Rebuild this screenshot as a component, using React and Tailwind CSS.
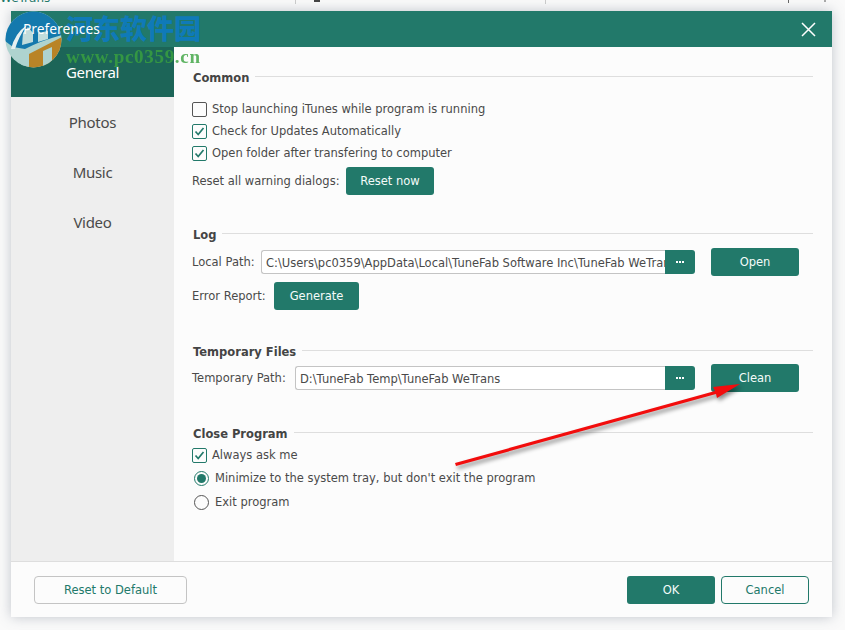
import React from 'react'

const Check = ({ checked }) => (
  <span className={`flex h-[15px] w-[15px] shrink-0 items-center justify-center rounded-[2px] border ${checked ? 'border-[#22796a]' : 'border-[#555]'}`}>
    {checked && (
      <svg width="11" height="11" viewBox="0 0 11 11" fill="none">
        <path d="M1.5 5.5 L4.2 8.5 L9.5 2" stroke="#22796a" strokeWidth="1.7" />
      </svg>
    )}
  </span>
)

const CheckRow = ({ checked, label, className }) => (
  <div className={`-ml-[1px] flex h-[22px] items-center gap-[5px] ${className || ''}`}>
    <Check checked={checked} />
    <span className="pt-[2px]">{label}</span>
  </div>
)

const Radio = ({ checked, label, className }) => (
  <div className={`flex items-center gap-[6px] pl-[1px] ${className || ''}`}>
    <span className={`flex h-[15px] w-[15px] shrink-0 items-center justify-center rounded-full border ${checked ? 'border-[#22796a]' : 'border-[#555]'}`}>
      {checked && <span className="h-[9px] w-[9px] rounded-full bg-[#22796a]" />}
    </span>
    <span className="pt-[2px]">{label}</span>
  </div>
)

const Heading = ({ title, className }) => (
  <div className={`flex h-[16px] items-center gap-[6px] ${className || ''}`}>
    <span className="pt-[2px] font-bold text-[#444]">{title}</span>
    <span className="mb-[4px] h-px flex-1 bg-[#dedede]" />
  </div>
)

const GreenButton = ({ label, className }) => (
  <button className={`h-[28px] rounded-[3px] bg-[#22796a] pt-[2px] text-[#f4fbf9] ${className || ''}`}>{label}</button>
)

const PathField = ({ value, className }) => (
  <div className={`flex h-[24px] ${className || ''}`}>
    <div className="flex-1 overflow-hidden whitespace-nowrap rounded-l-[3px] border border-r-0 border-[#c4c4c4] bg-white pl-[4px] leading-[24px]">{value}</div>
    <div className="flex w-[30px] items-center justify-center gap-[1px] rounded-r-[3px] bg-[#22796a]">
      <span className="h-[2px] w-[2px] bg-white" />
      <span className="h-[2px] w-[2px] bg-white" />
      <span className="h-[2px] w-[2px] bg-white" />
    </div>
  </div>
)

const menu = ['General', 'Photos', 'Music', 'Video']

const App = () => {
  return (
    <div className="relative h-[630px] w-[845px] overflow-hidden bg-[#fafafa] pl-[11px] pt-[11px] font-['DejaVu_Sans',sans-serif] text-[11.5px] text-[#4a4a4a]">
      {/* window behind the dialog */}
      <div className="absolute left-0 top-[-11px] text-[12px] text-[#22796a]">WeTrans</div>
      <div className="absolute left-[295px] top-0 h-[4px] w-px bg-[#ccc]" />
      <div className="absolute left-[545px] top-0 h-[4px] w-px bg-[#ccc]" />
      <div className="absolute left-[314px] top-0 h-[2px] w-[6px] bg-[#444]" />
      <div className="absolute left-[788px] top-0 h-[3px] w-px bg-[#666]" />
      <div className="absolute left-[824px] top-0 h-[2px] w-[2px] bg-[#aaa]" />

      <div className="relative flex h-[606px] w-[821px] flex-col bg-[#fcfcfc] shadow-[0_0_12px_rgba(90,100,120,0.35)]">
        <div className="flex h-[36px] items-center justify-between bg-[#22796a] pl-[12px] pr-[16px] font-['Noto_Sans',sans-serif] text-[13.8px] text-white">
          <span className="relative z-10">Preferences</span>
          <svg width="15" height="15" viewBox="0 0 15 15" fill="none">
            <path d="M1 1 L14 14 M14 1 L1 14" stroke="white" strokeWidth="1.5" />
          </svg>
        </div>

        <div className="flex flex-1">
          <div className="w-[163px] bg-[#eeeeee] text-center font-['Noto_Sans',sans-serif] text-[15px] tracking-[-0.3px]">
            {menu.map((item, i) => (
              <div
                key={item}
                className={`flex h-[50px] items-center justify-center ${i === 0 ? 'bg-[#1c6558] text-white' : 'text-[#4a4a4a]'}`}
              >
                {item}
              </div>
            ))}
          </div>

          <div className="flex-1 pl-[19px] pr-[19px] pt-[23px]">
            <Heading title="Common" />
            <CheckRow className="mt-[12px]" label="Stop launching iTunes while program is running" />
            <CheckRow checked label="Check for Updates Automatically" />
            <CheckRow checked label="Open folder after transfering to computer" />
            <div className="-ml-[1px] mt-[3px] flex items-center">
              <span className="w-[154px] pt-[2px]">Reset all warning dialogs:</span>
              <GreenButton label="Reset now" className="w-[88px]" />
            </div>

            <Heading title="Log" className="mt-[32px]" />
            <div className="-ml-[1px] mt-[5px] flex items-center">
              <span className="w-[69px] pt-[2px]">Local Path:</span>
              <PathField className="w-[434px]" value="C:\Users\pc0359\AppData\Local\TuneFab Software Inc\TuneFab WeTrans" />
              <GreenButton label="Open" className="ml-[16px] w-[88px]" />
            </div>
            <div className="-ml-[1px] mt-[6px] flex items-center">
              <span className="w-[82px] pt-[2px]">Error Report:</span>
              <GreenButton label="Generate" className="w-[85px]" />
            </div>

            <Heading title="Temporary Files" className="mt-[34px]" />
            <div className="-ml-[1px] mt-[4px] flex items-center">
              <span className="w-[103px] pt-[2px]">Temporary Path:</span>
              <PathField className="w-[400px]" value="D:\TuneFab Temp\TuneFab WeTrans" />
              <GreenButton label="Clean" className="ml-[16px] w-[88px]" />
            </div>

            <Heading title="Close Program" className="mt-[34px]" />
            <CheckRow checked label="Always ask me" className="mt-[2px]" />
            <Radio checked label="Minimize to the system tray, but don't exit the program" className="mt-[2px] h-[20px]" />
            <Radio label="Exit program" className="mt-[4px] h-[20px]" />
          </div>
        </div>

        <div className="flex h-[56px] items-center border-t border-[#dedede] pl-[23px] pr-[23px]">
          <button className="h-[28px] w-[153px] rounded-[4px] border border-[#c4c4c4] pt-[2px] text-[#22796a]">Reset to Default</button>
          <GreenButton label="OK" className="ml-auto w-[88px]" />
          <button className="ml-[6px] h-[28px] w-[88px] rounded-[4px] border border-[#22796a] pt-[2px] text-[#22796a]">Cancel</button>
        </div>
      </div>

      {/* site watermark over the title bar */}
      <svg className="absolute left-[5px] top-[11px]" width="57" height="57" viewBox="0 0 57 57">
        <clipPath id="logo">
          <circle cx="28.5" cy="28.5" r="28" />
        </clipPath>
        <g clipPath="url(#logo)">
          <rect width="57" height="57" fill="#aed3cf" />
          <path d="M0 0 H57 V24 Q35 30 20 38 L8 36 L0 30 Z" fill="#1479ad" />
          <path d="M22 44 L57 26 V57 H22 Z" fill="#b98427" />
          <path d="M38 40 L47 36 V50 L38 57 Z" fill="#aed3cf" />
          <path d="M16 42 L24 42 V57 L16 57 Z" fill="#aed3cf" />
          <path d="M17 34 L18 22 L23 16 L28 22 V31 Z" fill="#c0dcdc" />
          <path d="M33 31 V22 L43 20 V28 Z" fill="#c0dcdc" />
          <path d="M6 38 Q10 22 22 14 Q14 25 10 38 Z" fill="#e6f0f0" />
        </g>
      </svg>
      <div className="absolute left-[66px] top-[10px] font-['Noto_Sans_CJK_SC',sans-serif] text-[27px] font-black leading-[36px] text-[#0f7ab8]">河东软件园</div>
      <div className="absolute left-[66px] top-[47px] font-['Liberation_Serif',serif] text-[19px] font-bold leading-[20px] tracking-[0.7px] text-[#3aa33f] opacity-80">www.pc0359.cn</div>

      {/* red arrow annotation */}
      <svg className="absolute left-[450px] top-[378px] drop-shadow-[2px_3px_2px_rgba(0,0,0,0.45)]" width="300" height="96" viewBox="0 0 300 96">
        <path d="M5 85 L265 13 L263 9 L290 6 L267 20 L266 16 L6 88 Z" fill="#f20d0d" />
      </svg>
    </div>
  )
}

export default App
